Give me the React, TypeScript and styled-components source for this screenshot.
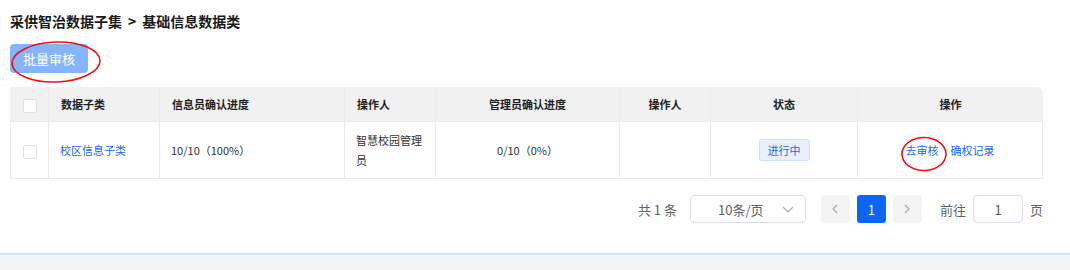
import styled, { createGlobalStyle } from "styled-components";

const GlobalStyle = createGlobalStyle`
  html, body {
    margin: 0;
    padding: 0;
    background: #fff;
    font-family: "Noto Sans CJK SC", "Noto Sans", sans-serif;
  }
`;

const Page = styled.div`
  position: relative;
  width: 1070px;
  height: 270px;
  overflow: hidden;
  background: #fff;
`;

const Content = styled.div`
  padding: 12px 27px 0 10px;
  height: 253px;
  box-sizing: border-box;
`;

const Title = styled.h2`
  margin: 0;
  font-size: 14px;
  line-height: 18px;
  font-weight: 700;
  color: #1a1a1a;
`;

const Sep = styled.span`
  margin: 0 6px;
`;

const BatchButton = styled.button`
  margin-top: 14px;
  width: 78px;
  height: 29px;
  border: none;
  border-radius: 4px;
  background: #86b4f8;
  color: #fff;
  font-family: inherit;
  font-size: 13px;
  padding: 0;
  cursor: not-allowed;
`;

const Table = styled.table`
  margin-top: 14px;
  width: 1033px;
  border-collapse: separate;
  border-spacing: 0;
  table-layout: fixed;
  font-size: 11px;
`;

const Th = styled.th<{ $center?: boolean; $last?: boolean }>`
  height: 35px;
  box-sizing: border-box;
  padding: 0 12px;
  background: #f1f1f2;
  color: #1f1f1f;
  font-weight: 700;
  text-align: ${(p) => (p.$center ? "center" : "left")};
  border-right: 1px solid #e9ebf0;
  border-bottom: 1px solid #e9ebf0;
  border-top-right-radius: ${(p) => (p.$last ? "6px" : "0")};
  &:first-child {
    border-left: 1px solid #e9ebf0;
  }
  &:last-child {
    border-right: none;
  }
`;

const Td = styled.td<{ $center?: boolean }>`
  height: 57px;
  box-sizing: border-box;
  padding: 0 11px;
  color: #333;
  line-height: 20px;
  text-align: ${(p) => (p.$center ? "center" : "left")};
  border-right: 1px solid #e9ebf0;
  border-bottom: 1px solid #e9ebf0;
  &:first-child {
    border-left: 1px solid #e9ebf0;
  }
`;

const Check = styled.span`
  display: inline-block;
  width: 12px;
  height: 12px;
  border: 1px solid #dcdfe6;
  border-radius: 2px;
  background: #fff;
  vertical-align: middle;
`;

const Link = styled.a`
  color: #1a6ae8;
  text-decoration: none;
  cursor: pointer;
  & + & {
    margin-left: 12px;
  }
`;

const Tag = styled.span`
  display: inline-block;
  height: 20px;
  line-height: 20px;
  padding: 0 8px;
  border: 1px solid #cfe0fb;
  border-radius: 3px;
  background: #e8f0fd;
  color: #1a6ae8;
`;

const Pager = styled.div`
  margin-top: 16px;
  display: flex;
  align-items: center;
  justify-content: flex-end;
  font-size: 13px;
  color: #606266;
`;

const Total = styled.span`
  margin-right: 13px;
`;

const SizeSelect = styled.div`
  position: relative;
  width: 116px;
  height: 28px;
  box-sizing: border-box;
  border: 1px solid #dcdfe6;
  border-radius: 4px;
  display: flex;
  align-items: center;
  padding-left: 27px;
  margin-right: 15px;
  svg {
    position: absolute;
    right: 11px;
    top: 9px;
  }
`;

const PageBtn = styled.span<{ $active?: boolean }>`
  width: 29px;
  height: 28px;
  margin-right: 7px;
  border-radius: 3px;
  display: flex;
  align-items: center;
  justify-content: center;
  background: ${(p) => (p.$active ? "#0a66f5" : "#f4f4f5")};
  color: ${(p) => (p.$active ? "#fff" : "#a8abb2")};
`;

const Jump = styled.span`
  margin-left: 11px;
  display: flex;
  align-items: center;
  gap: 7px;
`;

const JumpInput = styled.div`
  width: 50px;
  height: 28px;
  box-sizing: border-box;
  border: 1px solid #dcdfe6;
  border-radius: 4px;
  display: flex;
  align-items: center;
  justify-content: center;
  color: #555;
`;

const Footer = styled.div`
  height: 17px;
  border-top: 2px solid #d3e4fb;
  background: #f4f4f4;
`;

const Mark = styled.svg`
  position: absolute;
  left: 0;
  top: 0;
  pointer-events: none;
`;

const Chevron = ({ dir }: { dir: "left" | "right" | "down" }) => {
  const d =
    dir === "left" ? "M6 2 L2 6 L6 10" : dir === "right" ? "M2 2 L6 6 L2 10" : "M1 2 L6 7 L11 2";
  return (
    <svg width={dir === "down" ? 12 : 8} height={12} viewBox={dir === "down" ? "0 0 12 12" : "0 0 8 12"}>
      <path d={d} fill="none" stroke="#a8abb2" strokeWidth="1.2" />
    </svg>
  );
};

const cols = [39, 111, 185, 91, 184, 91, 147, 185];

export default function App() {
  return (
    <Page>
      <GlobalStyle />
      <Content>
        <Title>
          采供智治数据子集<Sep>&gt;</Sep>基础信息数据类
        </Title>
        <BatchButton>批量审核</BatchButton>
        <Table>
          <colgroup>
            {cols.map((w, i) => (
              <col key={i} style={{ width: w }} />
            ))}
          </colgroup>
          <thead>
            <tr>
              <Th $center><Check /></Th>
              <Th>数据子类</Th>
              <Th>信息员确认进度</Th>
              <Th>操作人</Th>
              <Th $center>管理员确认进度</Th>
              <Th $center>操作人</Th>
              <Th $center>状态</Th>
              <Th $center $last>操作</Th>
            </tr>
          </thead>
          <tbody>
            <tr>
              <Td $center><Check /></Td>
              <Td><Link>校区信息子类</Link></Td>
              <Td>10/10（100%）</Td>
              <Td>智慧校园管理员</Td>
              <Td $center>0/10（0%）</Td>
              <Td $center></Td>
              <Td $center><Tag>进行中</Tag></Td>
              <Td $center>
                <Link>去审核</Link>
                <Link>确权记录</Link>
              </Td>
            </tr>
          </tbody>
        </Table>
        <Pager>
          <Total>共 1 条</Total>
          <SizeSelect>
            10条/页
            <Chevron dir="down" />
          </SizeSelect>
          <PageBtn><Chevron dir="left" /></PageBtn>
          <PageBtn $active>1</PageBtn>
          <PageBtn><Chevron dir="right" /></PageBtn>
          <Jump>
            前往
            <JumpInput>1</JumpInput>
            页
          </Jump>
        </Pager>
      </Content>
      <Footer />
      <Mark width="1070" height="270">
        <ellipse cx="56" cy="62" rx="44" ry="20" fill="none" stroke="#f01010" strokeWidth="1.6" transform="rotate(-2 56 62)" />
        <ellipse cx="924" cy="154" rx="22" ry="16.5" fill="none" stroke="#f01010" strokeWidth="1.6" />
      </Mark>
    </Page>
  );
}
